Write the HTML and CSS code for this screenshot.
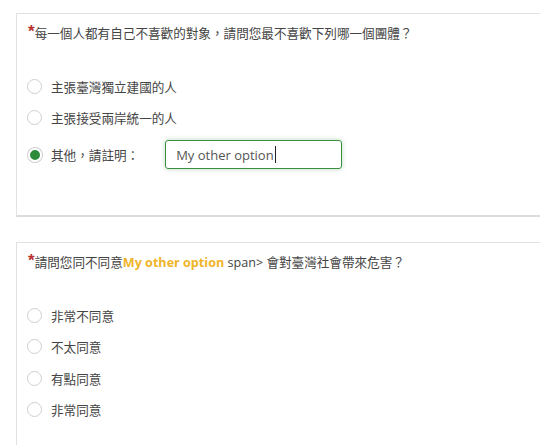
FILE: index.html
```html
<!DOCTYPE html>
<html lang="zh-Hant">
<head>
<meta charset="utf-8">
<title>Survey</title>
<link rel="stylesheet" href="styles.css">
</head>
<body>
<div class="page">
  <section class="card card-first">
    <h2 class="question"><span class="req">*</span>每一個人都有自己不喜歡的對象，請問您最不喜歡下列哪一個團體？</h2>
    <div class="options">
      <label class="option"><span class="radio"></span><span class="label">主張臺灣獨立建國的人</span></label>
      <label class="option"><span class="radio"></span><span class="label">主張接受兩岸統一的人</span></label>
      <label class="option option-other"><span class="radio checked"></span><span class="label">其他，請註明：</span>
        <span class="text-input">My other option<span class="caret"></span></span>
      </label>
    </div>
  </section>
  <section class="card card-second">
    <h2 class="question"><span class="req">*</span>請問您同不同意<b class="pipe">My other option</b> span&gt; 會對臺灣社會帶來危害？</h2>
    <div class="options">
      <label class="option"><span class="radio"></span><span class="label">非常不同意</span></label>
      <label class="option"><span class="radio"></span><span class="label">不太同意</span></label>
      <label class="option"><span class="radio"></span><span class="label">有點同意</span></label>
      <label class="option"><span class="radio"></span><span class="label">非常同意</span></label>
    </div>
  </section>
</div>
</body>
</html>
```
FILE: styles.css
```css
html, body {
  margin: 0;
  padding: 0;
  background: #fff;
  overflow: hidden;
}
body {
  font-family: "Open Sans", "Noto Sans CJK TC", sans-serif;
  font-size: 12.6px;
  color: #444;
}
.page {
  padding: 13px 0 0 16px;
  display: flex;
  flex-direction: column;
  gap: 25px;
  width: 600px;
}
.card {
  background: #fff;
  border: 1px solid #e2e2e2;
  border-bottom: 2px solid #dcdcdc;
  padding: 10px 0 0 11px;
  box-sizing: border-box;
}
.card-first {
  height: 204px;
}
.card-second {
  height: 260px;
}
.question {
  margin: 0;
  font-size: 12.6px;
  font-weight: normal;
  line-height: 20px;
  color: #444;
}
.req {
  color: #b83230;
  font-family: "Liberation Sans", sans-serif;
  font-weight: bold;
  font-size: 17px;
  line-height: 10px;
  vertical-align: 1px;
}
.pipe {
  color: #f0b429;
  font-weight: bold;
}
.options {
  display: flex;
  flex-direction: column;
  margin-top: 27px;
}
.option {
  display: flex;
  align-items: center;
  height: 31px;
}
.card-second .option {
  height: 31.3px;
}
.option-other {
  height: 43px;
}
.radio {
  width: 15px;
  height: 15px;
  box-sizing: border-box;
  border: 1px solid #cfcfcf;
  border-radius: 50%;
  margin-left: -1px;
  margin-right: 9px;
  background: #fff;
  flex: none;
}
.radio.checked {
  border: 2px solid #fff;
  background: #2e8b3a;
  box-shadow: 0 0 0 1px #cfcfcf;
  width: 14px;
  height: 14px;
  margin-left: -0.5px;
  margin-right: 9.5px;
}
.label {
  color: #444;
}
.text-input {
  margin-left: 26px;
  width: 177px;
  height: 29px;
  box-sizing: border-box;
  border: 1px solid #3a8f3f;
  border-radius: 3px;
  box-shadow: 0 0 5px rgba(58, 143, 63, 0.35);
  padding-left: 10px;
  display: flex;
  align-items: center;
  color: #555;
  font-size: 13px;
}
.caret {
  display: inline-block;
  width: 1px;
  height: 17px;
  background: #222;
  margin-left: 1px;
}
```
